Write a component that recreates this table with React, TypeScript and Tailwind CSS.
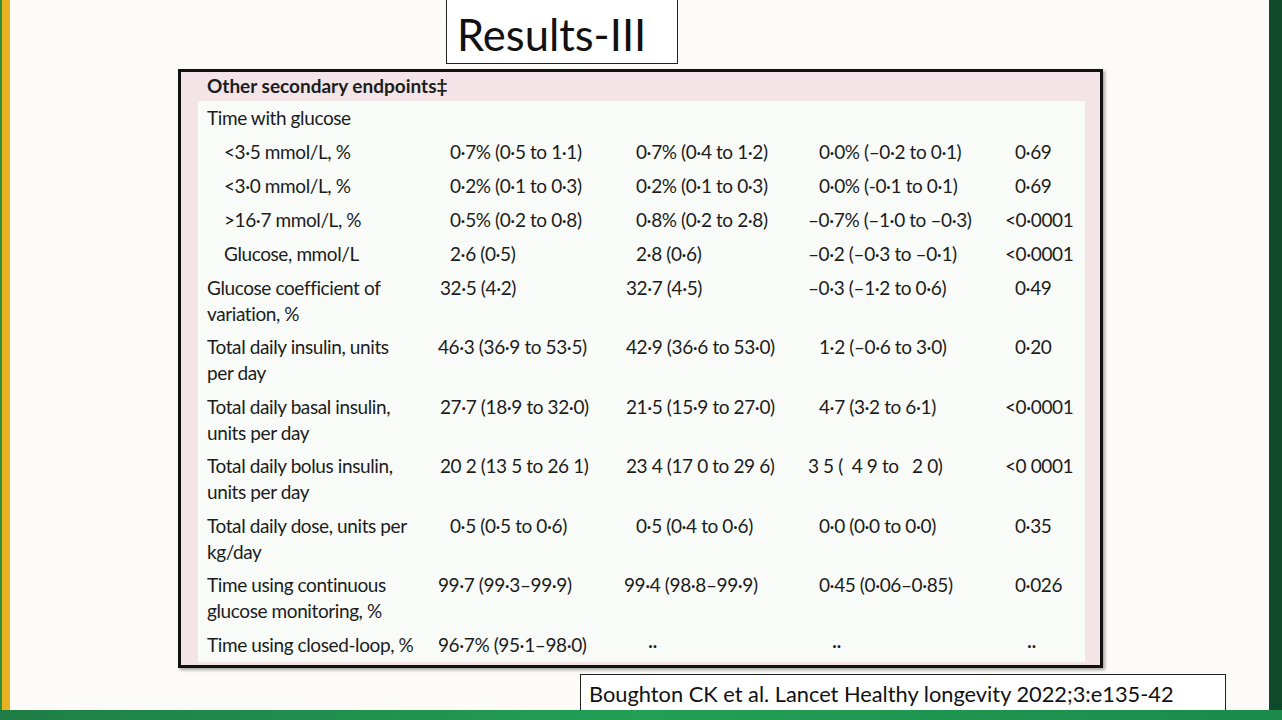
import React from "react";

type Cell = [string, string];
type Row = { label: string[]; indent?: boolean; cells?: Cell[] };

const rows: Row[] = [
  { label: ["Time with glucose"] },
  { label: ["<3·5 mmol/L, %"], indent: true, cells: [["0·7% (0·5 to 1·1)", "pl-[12px]"], ["0·7% (0·4 to 1·2)", "pl-[12px]"], ["0·0% (–0·2 to 0·1)", "pl-[11px]"], ["0·69", "pl-[10px]"]] },
  { label: ["<3·0 mmol/L, %"], indent: true, cells: [["0·2% (0·1 to 0·3)", "pl-[12px]"], ["0·2% (0·1 to 0·3)", "pl-[12px]"], ["0·0% (-0·1 to 0·1)", "pl-[11px]"], ["0·69", "pl-[10px]"]] },
  { label: [">16·7 mmol/L, %"], indent: true, cells: [["0·5% (0·2 to 0·8)", "pl-[12px]"], ["0·8% (0·2 to 2·8)", "pl-[12px]"], ["–0·7% (–1·0 to –0·3)", "pl-0"], ["<0·0001", "pl-0"]] },
  { label: ["Glucose, mmol/L"], indent: true, cells: [["2·6 (0·5)", "pl-[12px]"], ["2·8 (0·6)", "pl-[12px]"], ["–0·2 (–0·3 to –0·1)", "pl-0"], ["<0·0001", "pl-0"]] },
  { label: ["Glucose coefficient of", "variation, %"], cells: [["32·5 (4·2)", "pl-[2px]"], ["32·7 (4·5)", "pl-[2px]"], ["–0·3 (–1·2 to 0·6)", "pl-0"], ["0·49", "pl-[10px]"]] },
  { label: ["Total daily insulin, units", "per day"], cells: [["46·3 (36·9 to 53·5)", "pl-0"], ["42·9 (36·6 to 53·0)", "pl-[2px]"], ["1·2 (–0·6 to 3·0)", "pl-[11px]"], ["0·20", "pl-[10px]"]] },
  { label: ["Total daily basal insulin,", "units per day"], cells: [["27·7 (18·9 to 32·0)", "pl-[2px]"], ["21·5 (15·9 to 27·0)", "pl-[2px]"], ["4·7 (3·2 to 6·1)", "pl-[11px]"], ["<0·0001", "pl-0"]] },
  { label: ["Total daily bolus insulin,", "units per day"], cells: [["20 2 (13 5 to 26 1)", "pl-[2px]"], ["23 4 (17 0 to 29 6)", "pl-[2px]"], ["3 5 (\u00a0 4 9 to \u00a0 2 0)", "pl-0"], ["<0 0001", "pl-0"]] },
  { label: ["Total daily dose, units per", "kg/day"], cells: [["0·5 (0·5 to 0·6)", "pl-[12px]"], ["0·5 (0·4 to 0·6)", "pl-[12px]"], ["0·0 (0·0 to 0·0)", "pl-[11px]"], ["0·35", "pl-[10px]"]] },
  { label: ["Time using continuous", "glucose monitoring, %"], cells: [["99·7 (99·3–99·9)", "pl-0"], ["99·4 (98·8–99·9)", "pl-0"], ["0·45 (0·06–0·85)", "pl-[11px]"], ["0·026", "pl-[10px]"]] },
  { label: ["Time using closed-loop, %"], cells: [["96·7% (95·1–98·0)", "pl-0"], ["··", "pl-[24px]"], ["··", "pl-[24px]"], ["··", "pl-[22px]"]] },
];

function TableRow({ row }: { row: Row }) {
  const two = row.label.length > 1;
  return (
    <div className={`grid grid-cols-[240px_186px_184px_197px_80px] ${two ? "h-[59.5px]" : "h-[34px]"} pt-[4px] leading-[26px]`}>
      <div className={row.indent ? "pl-[26px]" : "pl-[9px]"}>
        {row.label.map((l, i) => (
          <div key={i} className="whitespace-nowrap">{l}</div>
        ))}
      </div>
      {(row.cells ?? []).map(([t, pl], i) => (
        <div key={i} className={`${pl} whitespace-nowrap`}>{t}</div>
      ))}
    </div>
  );
}

export default function App() {
  return (
    <div className="w-[1282px] h-[720px] overflow-hidden flex flex-col bg-[#fdfbf8]">
      <div className="flex h-[710px] shrink-0">
        <div className="w-[2px] bg-[#2f8f3e]" />
        <div className="w-[8px] bg-[#e7b322]" />
        <div className="flex-1 flex flex-col overflow-hidden">
          <div className="shrink-0 ml-[436px] w-[232px] h-[64px] border-x-[1.5px] border-b-[1.5px] border-[#222] bg-white flex items-end pb-[7px] pl-[10px]">
            <span className="text-[43.5px] leading-none text-[#111] font-['Lato',sans-serif]">Results-III</span>
          </div>
          <div className="shrink-0 ml-[168px] mt-[5px] w-[925px] h-[599px] border-[3px] border-[#111] bg-[#f3e5e7] shadow-[2px_2px_3px_rgba(0,0,0,0.35)] flex flex-col font-['Lato',sans-serif] text-[19px] text-[#1c1c1c] tracking-[-0.4px]">
            <div className="h-[30px] pl-[26px] flex items-center font-bold tracking-[0px]">Other secondary endpoints‡</div>
            <div className="ml-[17px] mr-[15px] flex-1 mb-[4px] bg-[#f8fbf8]">
              {rows.map((r, i) => (
                <TableRow key={i} row={r} />
              ))}
            </div>
          </div>
          <div className="shrink-0 ml-[570px] mt-[6px] w-[646px] h-[44px] border border-[#222] bg-white pl-[8px] pt-[8px] font-['Lato',sans-serif] text-[21.8px] leading-none text-[#111]">
            Boughton CK et al. Lancet Healthy longevity 2022;3:e135-42
          </div>
        </div>
        <div className="w-[13px] bg-[#0f4a2c]" />
      </div>
      <div className="h-[10px] shrink-0 bg-gradient-to-r from-[#1e7e45] via-[#22a055] to-[#1b8a4a]" />
    </div>
  );
}
